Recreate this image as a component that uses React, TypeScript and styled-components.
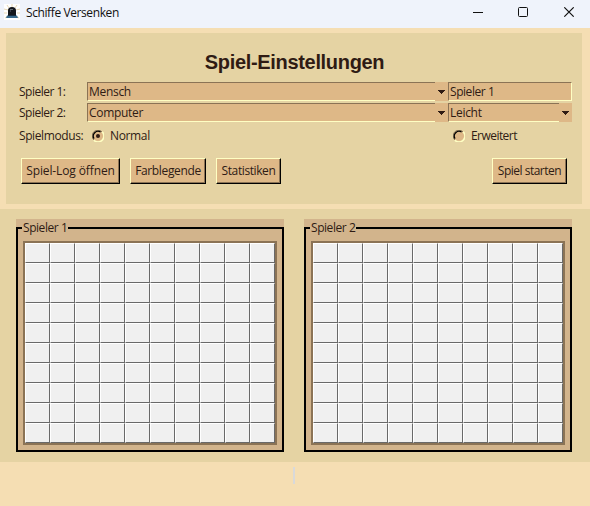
import React from 'react';
import styled, { createGlobalStyle } from 'styled-components';

const GlobalStyle = createGlobalStyle`
  * { box-sizing: border-box; }
  body { margin: 0; overflow: hidden; }
`;

const palette = {
  wheat: '#f5deb3',
  sand: '#e5d3a3',
  tan: '#d2b48c',
  wood: '#deb887',
  shade: '#8b7355',
  light: '#ffffc3',
  ink: '#2f1b14',
};

const Window = styled.div`
  width: 590px;
  height: 506px;
  display: flex;
  flex-direction: column;
  background: ${palette.wheat};
  color: ${palette.ink};
  font: 12px/16px 'Open Sans', 'Noto Sans', sans-serif;
  white-space: nowrap;
`;

const TitleBar = styled.header`
  height: 28px;
  display: flex;
  align-items: center;
  padding: 0 15px 4px 4px;
  background: #eff3fb;
  color: #111;
`;

const Title = styled.span`
  flex: 1;
  margin-left: 6px;
  padding-top: 1px;
  letter-spacing: -0.4px;
`;

const Controls = styled.div`
  display: flex;
  gap: 35px;
`;

const Settings = styled.section`
  width: 576px;
  height: 171px;
  margin: 5px 0 5px 6px;
  padding: 16px 10px 0 13px;
  background: ${palette.sand};
`;

const Heading = styled.h1`
  margin: 0 0 6px -2px;
  height: 27px;
  font: bold 20px/27px 'Liberation Sans', Arial, sans-serif;
  letter-spacing: -0.32px;
  text-align: center;
`;

const FormRow = styled.div<{ $gap?: number }>`
  display: grid;
  grid-template-columns: 68px 361px 124px;
  height: 19px;
  margin-bottom: ${p => p.$gap ?? 2}px;
`;

const Text = styled.span<{ $track?: number }>`
  line-height: 19px;
  letter-spacing: ${p => p.$track ?? -0.35}px;
`;

const Field = styled.div`
  display: flex;
  background: ${palette.wood};
`;

const FieldValue = styled.div<{ $closed?: boolean; $track?: number }>`
  flex: 1;
  padding-left: 1px;
  border: solid;
  border-width: 1px ${p => (p.$closed ? 1 : 0)}px 1px 1px;
  border-color: ${palette.shade} ${palette.light} ${palette.light} ${palette.shade};
  line-height: 17px;
  letter-spacing: ${p => p.$track ?? -0.3}px;
`;

const ArrowBox = styled.div`
  width: 13px;
  display: flex;
  align-items: center;
  justify-content: center;
`;

const RadioLabel = styled.div`
  display: flex;
  align-items: center;
  gap: 6px;
  padding-left: 5px;
`;

const ButtonRow = styled.div`
  display: flex;
  gap: 10px;
  padding: 0 5px 0 2px;
`;

const Button = styled.button<{ $width: number; $end?: boolean; $track?: number }>`
  width: ${p => p.$width}px;
  height: 26px;
  margin-left: ${p => (p.$end ? 'auto' : '0')};
  padding: 0 0 1px;
  border: solid;
  border-width: 1px;
  border-color: ${palette.light} #000 #000 ${palette.light};
  box-shadow: inset -1px -1px ${palette.shade};
  background: ${palette.wood};
  color: inherit;
  font: inherit;
  letter-spacing: ${p => p.$track ?? -0.3}px;
`;

const Boards = styled.main`
  display: flex;
  gap: 20px;
  height: 253px;
  padding: 10px 16px;
  background: ${palette.sand};
`;

const Board = styled.section`
  width: 268px;
  height: 233px;
  padding-top: 8px;
  background: ${palette.tan};
`;

const BoardFrame = styled.div`
  height: 225px;
  padding: 0 5px;
  border: 2px solid #000;
`;

const BoardTitle = styled.div`
  width: 46px;
  height: 16px;
  margin: -9px 0 5px -1px;
  padding: 0 1px;
  background: ${palette.tan};
  letter-spacing: -0.45px;
`;

const Grid = styled.div`
  display: grid;
  width: 254px;
  grid-template-columns: repeat(10, 25px);
  grid-auto-rows: 20px;
  border: 2px solid ${palette.shade};
`;

const Cell = styled.div`
  background: #f0f0f0;
  border: solid;
  border-width: 1px;
  border-color: #fff #696969 #696969 #fff;
`;

const Footer = styled.footer`
  display: flex;
  justify-content: center;
  padding: 5px 2px 0 0;
`;

const Tick = styled.div`
  width: 2px;
  height: 17px;
  background: #d9d9d9;
`;

const Arrow = () => (
  <ArrowBox>
    <svg width="7" height="4" shapeRendering="crispEdges">
      <path d="M0 0h7v1h-1v1h-1v1h-1v1h-1v-1h-1v-1h-1v-1h-1z" fill={palette.ink} />
    </svg>
  </ArrowBox>
);

const Radio = ({ checked }: { checked?: boolean }) => (
  <svg width="12" height="12">
    <circle cx="6" cy="6" r="5" fill={palette.wood} />
    <path d="M1.8 10.2A5.6 5.6 0 0 0 10.2 1.8" fill="none" stroke={palette.light} strokeWidth="1.5" />
    <path d="M1.8 10A5.5 5.5 0 0 1 10 1.8" fill="none" stroke={palette.shade} strokeWidth="1" />
    <path d="M2 8.6A4.8 4.8 0 0 1 8.6 2" fill="none" stroke="#000" strokeWidth="1.3" />
    {checked && <circle cx="6" cy="6" r="2" fill={palette.ink} />}
  </svg>
);

const AppIcon = () => (
  <svg width="16" height="16">
    <path d="M0 0h16v16H0z" fill="#fff" />
    <path
      d="M8 0v3M3 1l2 3M13 1l-2 3M0 5l4 1M16 5l-4 1M0 9h3M16 9h-3M1 14l3-2M15 14l-3-2"
      stroke="#e8d9b5"
    />
    <path d="M4 11V6.5Q4 3 8 3t4 3.5V11z" fill="#14171c" />
    <path d="M6 5.5h3M6 7h1" stroke="#626a74" />
    <path d="M3 11.5h10l1 2.5H2z" fill="#38698a" />
    <path d="M4 11.5h8" stroke="#182c3d" />
  </svg>
);

const WindowControls = () => (
  <Controls>
    <svg width="10" height="10" shapeRendering="crispEdges"><path d="M0 5h10v1H0z" fill="#111" /></svg>
    <svg width="10" height="10"><rect x=".5" y=".5" width="9" height="9" rx="1" fill="none" stroke="#111" /></svg>
    <svg width="12" height="10"><path d="M1.3.3l9.4 9.4M10.7.3L1.3 9.7" stroke="#111" strokeWidth="1.1" /></svg>
  </Controls>
);

const PlayerBoard = ({ name }: { name: string }) => (
  <Board>
    <BoardFrame>
      <BoardTitle>{name}</BoardTitle>
      <Grid>
        {Array.from({ length: 100 }, (_, i) => <Cell key={i} />)}
      </Grid>
    </BoardFrame>
  </Board>
);

export default function App() {
  return (
    <>
      <GlobalStyle />
      <Window>
        <TitleBar>
          <AppIcon />
          <Title>Schiffe Versenken</Title>
          <WindowControls />
        </TitleBar>
        <Settings>
          <Heading>Spiel-Einstellungen</Heading>
          <FormRow>
            <Text $track={-0.5}>Spieler 1:</Text>
            <Field><FieldValue>Mensch</FieldValue><Arrow /></Field>
            <Field><FieldValue $closed $track={-0.45}>Spieler 1</FieldValue></Field>
          </FormRow>
          <FormRow $gap={4}>
            <Text $track={-0.5}>Spieler 2:</Text>
            <Field><FieldValue>Computer</FieldValue><Arrow /></Field>
            <Field><FieldValue>Leicht</FieldValue><Arrow /></Field>
          </FormRow>
          <FormRow $gap={13}>
            <Text $track={-0.4}>Spielmodus:</Text>
            <RadioLabel><Radio checked /><Text>Normal</Text></RadioLabel>
            <RadioLabel><Radio /><Text $track={-0.55}>Erweitert</Text></RadioLabel>
          </FormRow>
          <ButtonRow>
            <Button $width={99} $track={-0.12}>Spiel-Log öffnen</Button>
            <Button $width={76} $track={-0.35}>Farblegende</Button>
            <Button $width={65} $track={-0.4}>Statistiken</Button>
            <Button $width={75} $end $track={-0.5}>Spiel starten</Button>
          </ButtonRow>
        </Settings>
        <Boards>
          <PlayerBoard name="Spieler 1" />
          <PlayerBoard name="Spieler 2" />
        </Boards>
        <Footer><Tick /></Footer>
      </Window>
    </>
  );
}
